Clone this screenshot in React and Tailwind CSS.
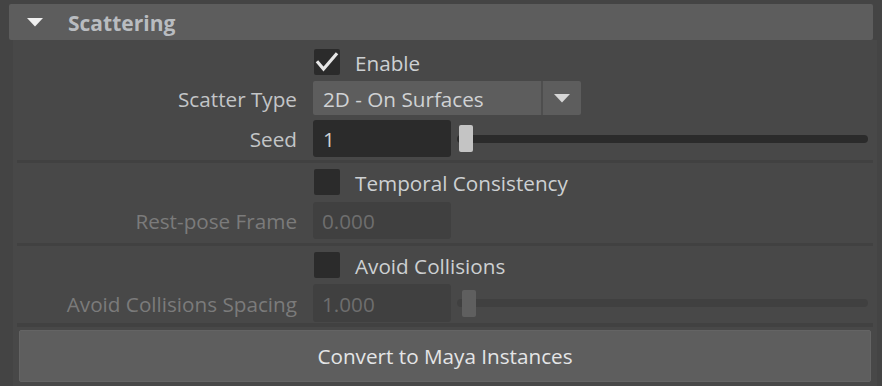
import React from 'react';

const font = { fontFamily: '"Open Sans", "Noto Sans", sans-serif' };

function Checkbox({ checked }) {
  return (
    <div className="w-[26px] h-[26px] bg-[#2b2b2b] rounded-[2px] flex items-center justify-center">
      {checked && (
        <svg width="26" height="26" viewBox="0 0 26 26">
          <path d="M4 13.5 L9.5 20 L22 5.5" fill="none" stroke="#e6e6e6" strokeWidth="3.2" strokeLinecap="square" />
        </svg>
      )}
    </div>
  );
}

function Label({ children, disabled }) {
  return (
    <div className={`w-[284px] pt-[2px] text-right text-[20.7px] leading-none ${disabled ? 'text-[#7b7b7b]' : 'text-[#c3c5c7]'}`}>
      {children}
    </div>
  );
}

function CheckRow({ label, checked, className }) {
  return (
    <div className={`flex items-center h-[26px] ${className}`}>
      <div className="w-[301px]" />
      <Checkbox checked={checked} />
      <span className="ml-[15px] pt-[2px] text-[20.7px] leading-none text-[#cdd0d2]">{label}</span>
    </div>
  );
}

function Slider({ disabled }) {
  return (
    <div className="relative flex-1 ml-[6px] mr-[9px] h-full flex items-center">
      <div className={`w-full h-[8px] rounded-full ${disabled ? 'bg-[#404040]' : 'bg-[#2b2b2b]'}`} />
      <div className={`absolute w-[14px] h-[27px] rounded-[2px] ${disabled ? 'left-[5px] bg-[#5f5f5f]' : 'left-[2px] bg-[#c4c4c4]'}`} />
    </div>
  );
}

function Separator({ className }) {
  return <div className={`ml-[4px] mr-[4px] bg-[#414141] ${className}`} />;
}

export default function App() {
  return (
    <div className="w-[882px] h-[386px] bg-[#444444] pt-[4px] overflow-hidden" style={font}>
      <div className="mx-[9px] h-[36px] bg-[#5d5d5d] rounded-[2px] flex items-center">
        <svg className="ml-[18px]" width="16" height="9" viewBox="0 0 16 9">
          <path d="M0 0 L16 0 L8 8.5 Z" fill="#f0f0f0" />
        </svg>
        <span className="ml-[25px] pt-[2px] text-[21px] font-bold leading-none text-[#b9bcc0]">Scattering</span>
      </div>

      <div className="ml-[13px] w-[864px] h-[346px] bg-[#484848] flex flex-col">
        <CheckRow label="Enable" checked className="mt-[9px]" />

        <div className="flex items-center mt-[6px] h-[34px]">
          <Label>Scatter Type</Label>
          <div className="ml-[16px] w-[268px] h-full bg-[#5d5d5d] rounded-[2px] flex items-center">
            <span className="ml-[10px] pt-[2px] flex-1 text-[20.7px] leading-none text-[#d0d2d4]">2D - On Surfaces</span>
            <div className="w-[2px] h-full bg-[#4e4e4e]" />
            <div className="w-[38px] flex items-center justify-center">
              <svg width="16" height="9" viewBox="0 0 16 9">
                <path d="M0 0 L16 0 L8 8.5 Z" fill="#d6d6d6" />
              </svg>
            </div>
          </div>
        </div>

        <div className="flex items-center mt-[5px] h-[37px]">
          <Label>Seed</Label>
          <div className="ml-[16px] w-[138px] h-full bg-[#2b2b2b] rounded-[3px] flex items-center">
            <span className="ml-[10px] pt-[2px] text-[20.7px] leading-none text-[#d0d2d4]">1</span>
          </div>
          <Slider />
        </div>

        <Separator className="mt-[3px] h-[3px]" />

        <CheckRow label="Temporal Consistency" className="mt-[6px]" />

        <div className="flex items-center mt-[7px] h-[37px]">
          <Label disabled>Rest-pose Frame</Label>
          <div className="ml-[16px] w-[138px] h-full bg-[#404040] rounded-[3px] flex items-center">
            <span className="ml-[9px] pt-[2px] text-[20.7px] leading-none text-[#6e6e6e]">0.000</span>
          </div>
        </div>

        <Separator className="mt-[4px] h-[3px]" />

        <CheckRow label="Avoid Collisions" className="mt-[6px]" />

        <div className="flex items-center mt-[6px] h-[38px]">
          <Label disabled>Avoid Collisions Spacing</Label>
          <div className="ml-[16px] w-[138px] h-full bg-[#404040] rounded-[3px] flex items-center">
            <span className="ml-[9px] pt-[2px] text-[20.7px] leading-none text-[#6e6e6e]">1.000</span>
          </div>
          <Slider disabled />
        </div>

        <Separator className="mt-[1px] h-[4px]" />

        <div className="mt-[3px] ml-[6px] w-[852px] h-[52px] bg-[#5e5e5e] border border-[#646464] rounded-[2px] flex items-center justify-center">
          <span className="text-[20.7px] leading-none text-[#e4e5e6]">Convert to Maya Instances</span>
        </div>
      </div>
    </div>
  );
}
